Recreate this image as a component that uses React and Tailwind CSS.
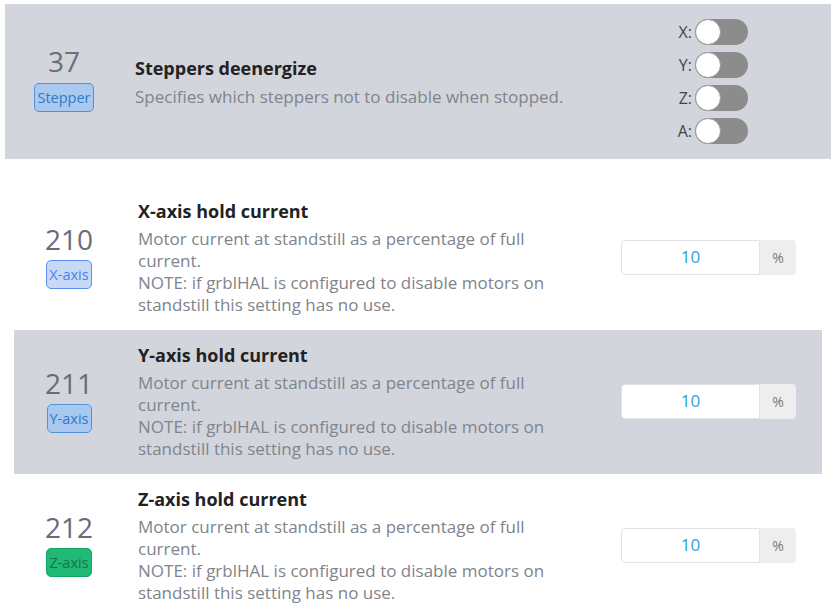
import React from 'react';

const font = { fontFamily: '"Open Sans", "Noto Sans", sans-serif' };

const desc = [
  'Motor current at standstill as a percentage of full current.',
  'NOTE: if grblHAL is configured to disable motors on standstill this setting has no use.',
];

const Toggle = ({ label }) => (
  <div className="flex items-center justify-end gap-[3px]">
    <span className="text-[16px] text-[#444] leading-none">{label}:</span>
    <div className="relative w-[53px] h-[26px] rounded-full bg-[#8c8c8c]">
      <div className="absolute left-0 top-0 w-[26px] h-[26px] rounded-full bg-white border border-[#9a9a9a]" />
    </div>
  </div>
);

const PercentInput = () => (
  <div className="flex h-[35px] w-[175px]">
    <div className="flex-1 flex items-center justify-center bg-white border border-[#e3e3e3] rounded-l-[4px] text-[17px] text-[#2ea4de]">
      10
    </div>
    <div className="w-[36px] flex items-center justify-center bg-[#eeeeee] rounded-r-[4px] text-[14px] text-[#777]">
      %
    </div>
  </div>
);

const AxisRow = ({ id, axis, title, gray, badge }) => (
  <div className={`flex items-center pt-[12px] pb-[14px] ${gray ? 'bg-[#d2d5dc]' : 'bg-white'}`}>
    <div className="w-[110px] flex flex-col items-center">
      <div className="text-[28px] leading-[28px] text-[#686c75]">{id}</div>
      <div className={`mt-[7px] px-[2px] h-[29px] flex items-center rounded-[5px] border text-[14.5px] ${badge}`}>
        {axis}
      </div>
    </div>
    <div className="ml-[14px] w-[415px]">
      <div className="text-[18px] font-bold text-[#222] leading-[26px]">{title}</div>
      <div className="mt-[4px] text-[17px] leading-[22px] text-[#80848c]">
        <p>{desc[0]}</p>
        <p>{desc[1]}</p>
      </div>
    </div>
    <div className="ml-[68px]">
      <PercentInput />
    </div>
  </div>
);

export default function App() {
  return (
    <div className="w-[836px] h-[616px] overflow-hidden bg-white pt-[4px]" style={font}>
      <div className="ml-[5px] w-[826px] h-[155px] bg-[#d2d5dc] flex items-center">
        <div className="w-[118px] flex flex-col items-center">
          <div className="text-[28px] leading-[20px] text-[#6b6f77]">37</div>
          <div className="mt-[12px] px-[2px] h-[29px] flex items-center rounded-[5px] border border-[#4f93dc] bg-[#a9c9ee] text-[14.5px] text-[#3279c8]">
            Stepper
          </div>
        </div>
        <div className="ml-[12px] flex-1">
          <div className="text-[18px] font-bold text-[#222] leading-[26px]">Steppers deenergize</div>
          <div className="text-[17px] leading-[22px] text-[#80848c] mt-[5px]">
            Specifies which steppers not to disable when stopped.
          </div>
        </div>
        <div className="mr-[83px] flex flex-col gap-[7px]">
          <Toggle label="X" />
          <Toggle label="Y" />
          <Toggle label="Z" />
          <Toggle label="A" />
        </div>
      </div>
      <div className="ml-[14px] w-[808px] mt-[27px]">
        <AxisRow
          id="210"
          axis="X-axis"
          title="X-axis hold current"
          badge="bg-[#c8d9f7] border-[#5a8ef0] text-[#4b80ef]"
        />
        <AxisRow
          id="211"
          axis="Y-axis"
          title="Y-axis hold current"
          gray
          badge="bg-[#a8c8f0] border-[#4f93dc] text-[#3279c8]"
        />
        <AxisRow
          id="212"
          axis="Z-axis"
          title="Z-axis hold current"
          badge="bg-[#1fba75] border-[#17a262] text-[#1a7446]"
        />
      </div>
    </div>
  );
}
